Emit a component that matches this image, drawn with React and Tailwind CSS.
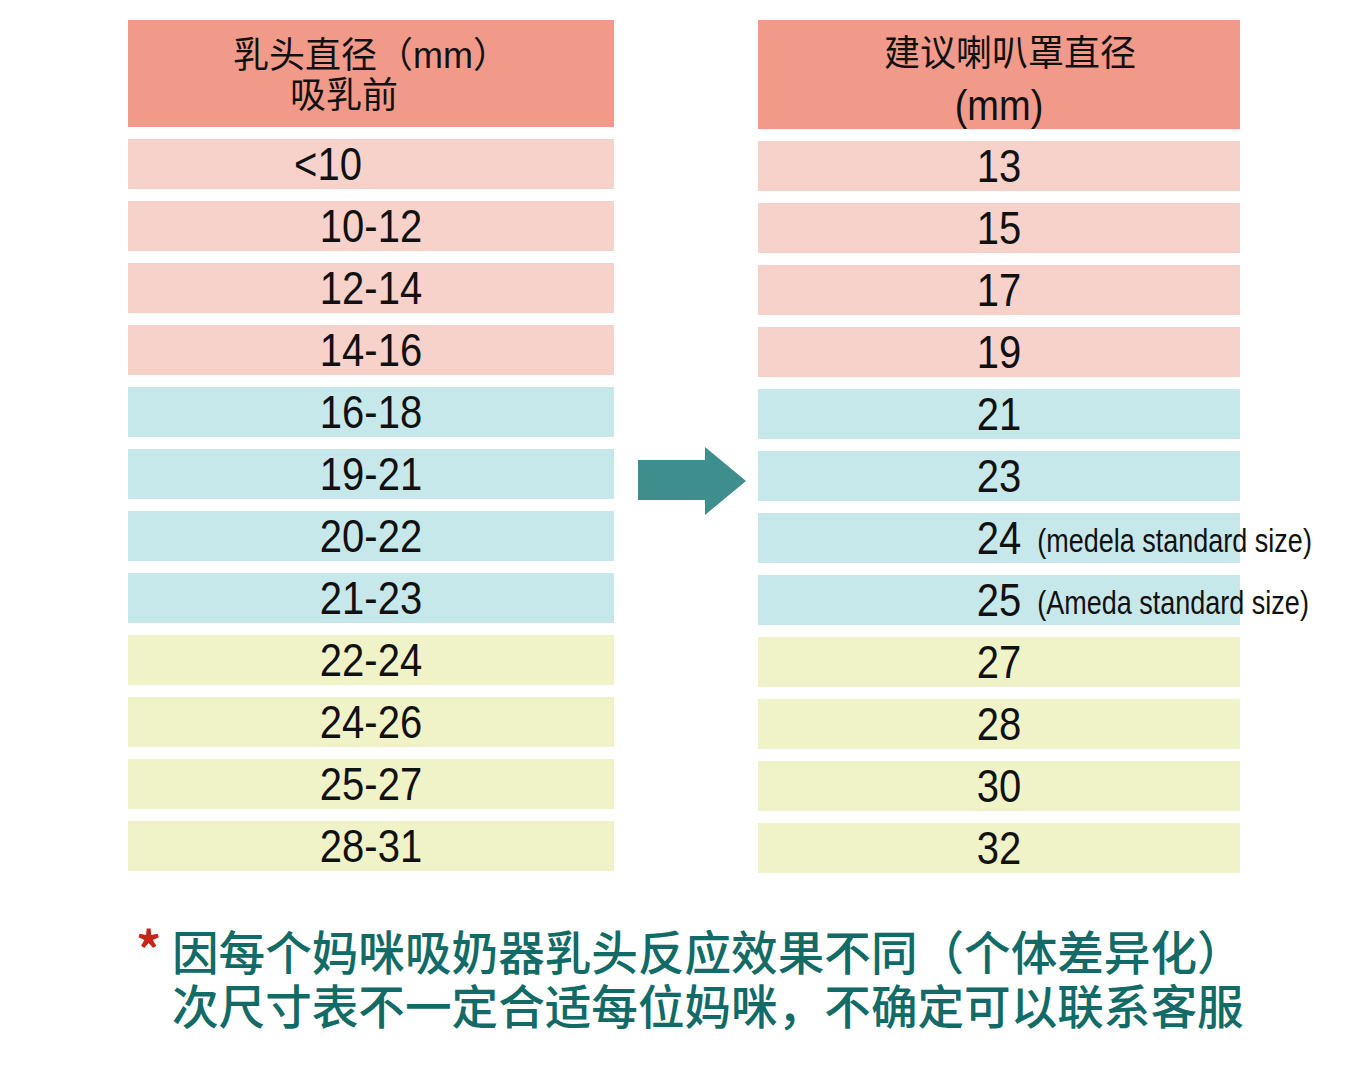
import React from 'react';

const left = [
  { v: '<10', c: 'pink', shift: true },
  { v: '10-12', c: 'pink' },
  { v: '12-14', c: 'pink' },
  { v: '14-16', c: 'pink' },
  { v: '16-18', c: 'blue' },
  { v: '19-21', c: 'blue' },
  { v: '20-22', c: 'blue' },
  { v: '21-23', c: 'blue' },
  { v: '22-24', c: 'yellow' },
  { v: '24-26', c: 'yellow' },
  { v: '25-27', c: 'yellow' },
  { v: '28-31', c: 'yellow' },
];

const right = [
  { v: '13', c: 'pink' },
  { v: '15', c: 'pink' },
  { v: '17', c: 'pink' },
  { v: '19', c: 'pink' },
  { v: '21', c: 'blue' },
  { v: '23', c: 'blue' },
  { v: '24', c: 'blue', note: '(medela standard size)' },
  { v: '25', c: 'blue', note: '(Ameda standard size)' },
  { v: '27', c: 'yellow' },
  { v: '28', c: 'yellow' },
  { v: '30', c: 'yellow' },
  { v: '32', c: 'yellow' },
];

const bg = {
  pink: 'bg-[#f7d2cb]',
  blue: 'bg-[#c7e8ea]',
  yellow: 'bg-[#eff3c7]',
};

function Row({ row }) {
  return (
    <div className={`${bg[row.c]} h-[50px] flex items-center justify-center`}>
      <span className={`relative inline-block scale-y-[1.15] text-[40px] leading-none text-[#111] ${row.shift ? 'mr-[86px]' : ''}`}>
        {row.v}
        {row.note && (
          <span className="absolute left-full top-[10px] ml-[16px] whitespace-nowrap text-[27px] leading-none scale-y-[1.05]">
            {row.note}
          </span>
        )}
      </span>
    </div>
  );
}

export default function App() {
  return (
    <div className="w-[1368px] h-[1081px] bg-white pt-[20px] pl-[128px] font-['Liberation_Sans','Noto_Sans_CJK_SC',sans-serif] text-[#111]">
      <div className="flex items-start">
        {/* left column */}
        <div className="w-[486px] flex flex-col gap-[12px]">
          <div className="h-[107px] bg-[#f19a8a] flex flex-col items-center justify-center text-[36px] leading-[40px] pt-[4px]">
            <div>乳头直径（mm）</div>
            <div className="mr-[54px]">吸乳前</div>
          </div>
          {left.map((r) => (
            <Row key={r.v} row={r} />
          ))}
        </div>

        {/* arrow */}
        <div className="w-[144px] pt-[427px] pl-[24px]">
          <svg width="108" height="68" viewBox="0 0 108 68">
            <polygon points="0,13 67,13 67,0 108,34 67,68 67,53 0,53" fill="#3d8e8d" />
          </svg>
        </div>

        {/* right column */}
        <div className="w-[482px] flex flex-col gap-[12px]">
          <div className="h-[109px] bg-[#f19a8a] flex flex-col items-center justify-center pt-[10px]">
            <div className="text-[36px] leading-[52px] ml-[22px]">建议喇叭罩直径</div>
            <div className="text-[38px] leading-[52px] scale-y-[1.1]">(mm)</div>
          </div>
          {right.map((r) => (
            <Row key={r.v} row={r} />
          ))}
        </div>
      </div>

      {/* footer note */}
      <div className="mt-[50px] flex items-start font-['Noto_Sans_CJK_SC',sans-serif]">
        <span className="w-[44px] pl-[8px] text-[50px] leading-none font-bold text-[#c4261c] mt-[-1px]">*</span>
        <div className="text-[46.6px] leading-[54px] font-medium text-[#126b66] whitespace-nowrap">
          <div>因每个妈咪吸奶器乳头反应效果不同（个体差异化）</div>
          <div>次尺寸表不一定合适每位妈咪，不确定可以联系客服</div>
        </div>
      </div>
    </div>
  );
}
